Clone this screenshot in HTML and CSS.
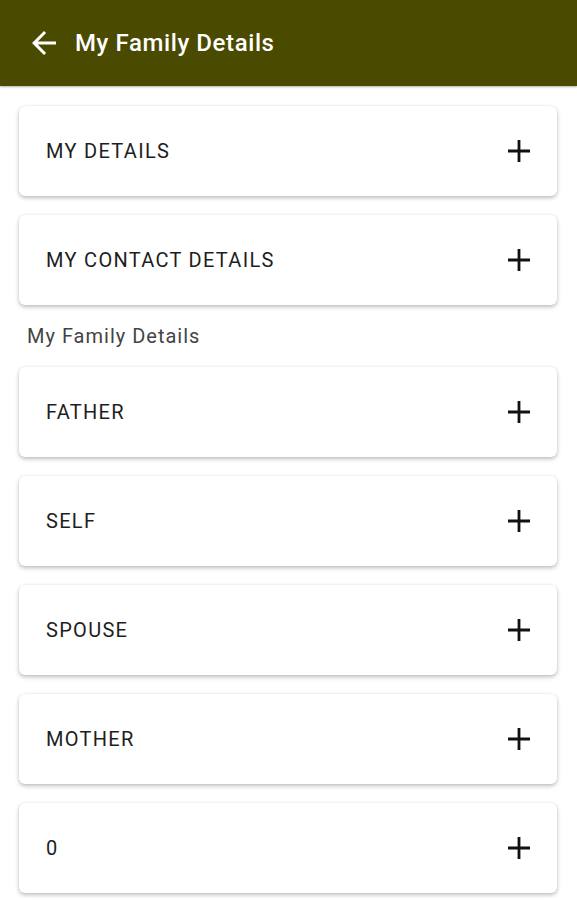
FILE: index.html
```html
<!DOCTYPE html>
<html lang="en">
<head>
  <meta charset="UTF-8">
  <meta name="viewport" content="width=device-width, initial-scale=1.0">
  <title>My Family Details</title>
  <link rel="stylesheet" href="styles.css">
</head>
<body>
  <div class="toolbar">
    <svg class="back-icon" viewBox="0 0 24 24"><path d="M20 11H7.83l5.59-5.59L12 4l-8 8 8 8 1.41-1.41L7.83 13H20v-2z"/></svg>
    <span class="toolbar-title">My Family Details</span>
  </div>

  <div class="content">
    <div class="card">
      <span class="card-title">MY DETAILS</span>
      <svg class="plus" viewBox="0 0 24 24"><path d="M12 1v22M1 12h22"/></svg>
    </div>
    <div class="card">
      <span class="card-title">MY CONTACT DETAILS</span>
      <svg class="plus" viewBox="0 0 24 24"><path d="M12 1v22M1 12h22"/></svg>
    </div>

    <div class="section-label">My Family Details</div>

    <div class="card">
      <span class="card-title">FATHER</span>
      <svg class="plus" viewBox="0 0 24 24"><path d="M12 1v22M1 12h22"/></svg>
    </div>
    <div class="card">
      <span class="card-title">SELF</span>
      <svg class="plus" viewBox="0 0 24 24"><path d="M12 1v22M1 12h22"/></svg>
    </div>
    <div class="card">
      <span class="card-title">SPOUSE</span>
      <svg class="plus" viewBox="0 0 24 24"><path d="M12 1v22M1 12h22"/></svg>
    </div>
    <div class="card">
      <span class="card-title">MOTHER</span>
      <svg class="plus" viewBox="0 0 24 24"><path d="M12 1v22M1 12h22"/></svg>
    </div>
    <div class="card">
      <span class="card-title">0</span>
      <svg class="plus" viewBox="0 0 24 24"><path d="M12 1v22M1 12h22"/></svg>
    </div>
  </div>
</body>
</html>
```

FILE: styles.css
```css
body {
  margin: 0;
  font-family: Roboto, "Noto Sans", Arial, sans-serif;
  background: #fff;
  overflow: hidden;
}

.toolbar {
  height: 86px;
  background: #4a4a00;
  display: flex;
  align-items: center;
  padding-left: 26px;
  gap: 13px;
  box-shadow: 0 1px 2px rgba(0, 0, 0, 0.3);
}

.back-icon {
  width: 36px;
  height: 36px;
  fill: #fff;
}

.toolbar-title {
  color: #fff;
  font-size: 24px;
  font-weight: 500;
  letter-spacing: 0.6px;
}

.content {
  display: flex;
  flex-direction: column;
  gap: 19px;
  padding: 20px 20px 20px 19px;
}

.card {
  height: 90px;
  background: #fff;
  border-radius: 6px;
  box-shadow: 0 2px 4px rgba(0, 0, 0, 0.25), 0 0 2px rgba(0, 0, 0, 0.08);
  display: flex;
  align-items: center;
  justify-content: space-between;
  padding: 0 26px 0 27px;
  flex-shrink: 0;
}

.card-title {
  font-size: 20px;
  letter-spacing: 1.3px;
  color: #1e1e1e;
}

.plus {
  width: 24px;
  height: 24px;
  stroke: #111;
  stroke-width: 2.8;
  fill: none;
}

.section-label {
  line-height: 24px;
  font-size: 20px;
  letter-spacing: 1px;
  color: #444;
  margin-left: 8px;
}
```
